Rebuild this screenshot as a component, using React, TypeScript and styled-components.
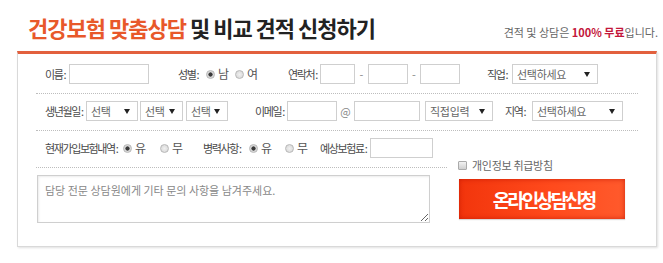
import React from "react";
import styled, { createGlobalStyle } from "styled-components";

const Global = createGlobalStyle`
  html, body { margin: 0; padding: 0; background: #fff; }
  body {
    font-family: "Noto Sans CJK KR", "Noto Sans", sans-serif;
    width: 663px; height: 263px; overflow: hidden;
  }
  * { box-sizing: border-box; }
`;

const Page = styled.div`
  width: 663px;
`;

const Header = styled.header`
  height: 51px;
  display: flex;
  align-items: flex-end;
  justify-content: space-between;
  padding: 0 5px 13px 28px;
`;

const Title = styled.h1`
  margin: 0;
  font-size: 22px;
  line-height: 22px;
  font-weight: 700;
  letter-spacing: -1px;
  color: #222;
`;

const Accent = styled.span`
  color: #e8582a;
`;

const Note = styled.p`
  margin: 0;
  font-size: 11px;
  line-height: 12px;
  color: #666;
  letter-spacing: 0;
`;

const Free = styled.strong`
  color: #c3173b;
  font-weight: 700;
`;

const Box = styled.section`
  margin-left: 17px;
  width: 640px;
  height: 196px;
  border: 1px solid #d9d9d9;
  border-top: 3px solid #e2603d;
  box-shadow: 1px 1px 2px rgba(0, 0, 0, 0.12);
  padding: 0 18px;
  background: #fff;
`;

const Row = styled.div<{ $top: number; $bottom?: number }>`
  display: flex;
  align-items: center;
  padding: ${(p) => p.$top}px 0 ${(p) => p.$bottom ?? 9}px 9px;
  border-bottom: 1px dotted #bdbdbd;
`;

const Field = styled.div<{ $w?: number }>`
  display: flex;
  align-items: center;
  flex: none;
  ${(p) => (p.$w ? `width: ${p.$w}px;` : "")}
`;

const Label = styled.span<{ $w: number }>`
  width: ${(p) => p.$w}px;
  flex: none;
  font-size: 11px;
  line-height: 14px;
  color: #4a4a4a;
  letter-spacing: -1.4px;
  white-space: nowrap;
`;

const TextInput = styled.input<{ $w: number }>`
  width: ${(p) => p.$w}px;
  height: 20px;
  flex: none;
  margin: 0;
  padding: 0 4px;
  border: 1px solid #cfcfcf;
  background: #fff;
  outline: none;
  font-size: 11px;
`;

const Select = styled.div<{ $w: number; $gap?: number }>`
  width: ${(p) => p.$w}px;
  height: 20px;
  flex: none;
  margin-left: ${(p) => p.$gap ?? 0}px;
  border: 1px solid #cfcfcf;
  background: #fff;
  display: flex;
  align-items: center;
  justify-content: space-between;
  padding: 0 7px 0 4px;
  font-size: 11px;
  color: #666;
  letter-spacing: -0.3px;
  white-space: nowrap;
`;

const Arrow = styled.span`
  width: 0;
  height: 0;
  border-left: 3px solid transparent;
  border-right: 3px solid transparent;
  border-top: 5px solid #222;
`;

const Sep = styled.span<{ $w: number }>`
  width: ${(p) => p.$w}px;
  flex: none;
  text-align: center;
  font-size: 11px;
  color: #888;
`;

const Option = styled.label<{ $gap: number }>`
  display: flex;
  align-items: center;
  gap: 3px;
  margin-right: ${(p) => p.$gap}px;
  font-size: 12px;
  color: #555;
  line-height: 14px;
`;

const Dot = styled.span<{ $on?: boolean }>`
  width: 9px;
  height: 9px;
  flex: none;
  border-radius: 50%;
  border: 1px solid #b8b8b8;
  background: ${(p) =>
    p.$on
      ? "radial-gradient(circle, #3a3a3a 0 1.8px, #d9d9d9 2.4px)"
      : "radial-gradient(circle, #f0f0f0, #d4d4d4)"};
`;

const Bottom = styled.div`
  display: flex;
  align-items: flex-end;
`;

const LeftCol = styled.div`
  width: 411px;
  flex: none;
`;

const Memo = styled.textarea`
  display: block;
  width: 393px;
  height: 48px;
  margin: 7px 0 0 1px;
  padding: 8px 7px;
  border: 1px solid #cfcfcf;
  box-shadow: inset 1px 1px 2px rgba(0, 0, 0, 0.08);
  font-family: inherit;
  font-size: 11px;
  line-height: 13px;
  letter-spacing: 0;
  outline: none;
  &::placeholder {
    color: #888;
  }
`;

const RightCol = styled.div`
  margin-left: 11px;
  display: flex;
  flex-direction: column;
  padding-bottom: 4px;
`;

const Agree = styled.label`
  display: flex;
  align-items: center;
  gap: 5px;
  height: 12px;
  margin-bottom: 8px;
  font-size: 11px;
  line-height: 12px;
  color: #666;
  letter-spacing: -0.3px;
`;

const Check = styled.span`
  width: 9px;
  height: 9px;
  border: 1px solid #aaa;
  border-radius: 1px;
  background: linear-gradient(#f2f2f2, #cfcfcf);
`;

const Submit = styled.button`
  width: 166px;
  height: 40px;
  margin-left: 1px;
  border: 0;
  padding: 0 0 0 3px;
  cursor: pointer;
  background: linear-gradient(90deg, #f2350c, #ff4a1c 55%, #ff5a2c);
  box-shadow: inset 0 0 5px rgba(190, 20, 0, 0.75), 0 1px 1px rgba(0, 0, 0, 0.15);
  color: #fff;
  font-family: inherit;
  font-size: 19px;
  font-weight: 700;
  letter-spacing: -3px;
`;

function Radios({ items, on, gap }: { items: string[]; on: number; gap: number }) {
  return (
    <>
      {items.map((t, i) => (
        <Option key={t} $gap={gap}>
          <Dot $on={i === on} />
          {t}
        </Option>
      ))}
    </>
  );
}

export default function App() {
  return (
    <Page>
      <Global />
      <Header>
        <Title>
          <Accent>건강보험 맞춤상담</Accent> 및 비교 견적 신청하기
        </Title>
        <Note>
          견적 및 상담은 <Free>100% 무료</Free>입니다.
        </Note>
      </Header>
      <Box>
        <Row $top={10}>
          <Field $w={133}>
            <Label $w={24}>이름 :</Label>
            <TextInput $w={80} />
          </Field>
          <Field $w={110}>
            <Label $w={28}>성별 :</Label>
            <Radios items={["남", "여"]} on={0} gap={6} />
          </Field>
          <Field $w={199}>
            <Label $w={32}>연락처 :</Label>
            <TextInput $w={35} />
            <Sep $w={13}>-</Sep>
            <TextInput $w={40} />
            <Sep $w={12}>-</Sep>
            <TextInput $w={40} />
          </Field>
          <Field>
            <Label $w={25}>직업 :</Label>
            <Select $w={86}>
              선택하세요
              <Arrow />
            </Select>
          </Field>
        </Row>
        <Row $top={7}>
          <Field $w={210}>
            <Label $w={41}>생년월일 :</Label>
            <Select $w={52}>
              선택
              <Arrow />
            </Select>
            <Select $w={43} $gap={2}>
              선택
              <Arrow />
            </Select>
            <Select $w={42} $gap={3}>
              선택
              <Arrow />
            </Select>
          </Field>
          <Field $w={250}>
            <Label $w={32}>이메일 :</Label>
            <TextInput $w={50} />
            <Sep $w={17}>@</Sep>
            <TextInput $w={66} />
            <Select $w={68} $gap={5}>
              직접입력
              <Arrow />
            </Select>
          </Field>
          <Field>
            <Label $w={27}>지역 :</Label>
            <Select $w={91}>
              선택하세요
              <Arrow />
            </Select>
          </Field>
        </Row>
        <Bottom>
          <LeftCol>
            <Row $top={7} $bottom={9}>
              <Field $w={158}>
                <Label $w={78}>현재가입보험내역 :</Label>
                <Radios items={["유", "무"]} on={0} gap={14} />
              </Field>
              <Field $w={117}>
                <Label $w={46}>병력사항 :</Label>
                <Radios items={["유", "무"]} on={0} gap={13} />
              </Field>
              <Field>
                <Label $w={50}>예상보험료 :</Label>
                <TextInput $w={63} />
              </Field>
            </Row>
            <Memo placeholder="담당 전문 상담원에게 기타 문의 사항을 남겨주세요." />
          </LeftCol>
          <RightCol>
            <Agree>
              <Check />
              개인정보 취급방침
            </Agree>
            <Submit type="button">온라인상담신청</Submit>
          </RightCol>
        </Bottom>
      </Box>
    </Page>
  );
}
